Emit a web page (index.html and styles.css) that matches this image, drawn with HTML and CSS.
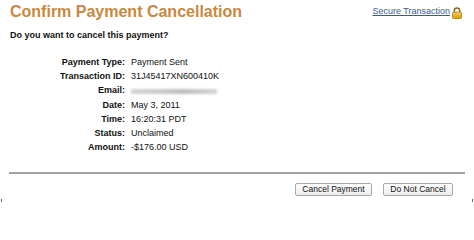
FILE: index.html
```html
<!DOCTYPE html>
<html lang="en">
<head>
<meta charset="utf-8">
<title>Confirm Payment Cancellation</title>
<link rel="stylesheet" href="styles.css">
</head>
<body>
<div class="page">
  <div class="header">
    <h1 class="title">Confirm Payment Cancellation</h1>
    <div class="secure">
      <a href="#" class="secure-link">Secure Transaction</a>
      <svg class="lock" width="10" height="12" viewBox="0 0 10 12" aria-hidden="true">
        <defs>
          <linearGradient id="lockBody" x1="0" y1="0" x2="0" y2="1">
            <stop offset="0" stop-color="#f7d25a"/>
            <stop offset="1" stop-color="#d99a12"/>
          </linearGradient>
        </defs>
        <path d="M2.3 5.5 V3.8 A2.7 2.7 0 0 1 7.7 3.8 V5.5" fill="none" stroke="#8a6a1a" stroke-width="1.5"/>
        <rect x="0.5" y="5.2" width="9" height="6.3" rx="1" fill="url(#lockBody)" stroke="#a9770e" stroke-width="0.8"/>
      </svg>
    </div>
  </div>
  <p class="question">Do you want to cancel this payment?</p>
  <div class="details">
    <div class="label">Payment Type:</div><div class="value">Payment Sent</div>
    <div class="label">Transaction ID:</div><div class="value">31J45417XN600410K</div>
    <div class="label">Email:</div><div class="value"><span class="blurred"></span></div>
    <div class="label">Date:</div><div class="value">May 3, 2011</div>
    <div class="label">Time:</div><div class="value">16:20:31 PDT</div>
    <div class="label">Status:</div><div class="value">Unclaimed</div>
    <div class="label">Amount:</div><div class="value">-$176.00 USD</div>
  </div>
  <hr class="rule">
  <div class="actions">
    <button class="btn btn-wide">Cancel Payment</button>
    <button class="btn">Do Not Cancel</button>
  </div>
</div>
<div class="footer"></div>
</body>
</html>
```
FILE: styles.css
```css
html, body {
  margin: 0;
  padding: 0;
  background: #ffffff;
}

body {
  font-family: "Liberation Sans", Arial, sans-serif;
  color: #111111;
  width: 474px;
  height: 202px;
  overflow: hidden;
}

.page {
  padding: 3px 9px 0 9px;
}

.header {
  display: flex;
  justify-content: space-between;
  align-items: flex-start;
}

.title {
  margin: 0 0 0 1px;
  font-size: 16px;
  line-height: 18px;
  font-weight: bold;
  color: #c8893f;
}

.secure {
  display: flex;
  align-items: flex-start;
  gap: 2px;
  margin-top: 3px;
  margin-right: 3px;
}

.secure-link {
  font-size: 9px;
  line-height: 11px;
  color: #3a5a93;
  text-decoration: underline;
}

.lock {
  display: block;
  margin-top: 1px;
}

.question {
  margin: 9px 0 0 1px;
  font-size: 9px;
  line-height: 11px;
  font-weight: bold;
}

.details {
  display: grid;
  grid-template-columns: 116px auto;
  column-gap: 6px;
  margin-top: 14px;
  font-size: 9px;
  line-height: 14.2px;
}

.label {
  text-align: right;
  font-weight: bold;
}

.value {
  font-weight: normal;
}

.blurred {
  display: inline-block;
  width: 86px;
  height: 5px;
  vertical-align: middle;
  background: linear-gradient(90deg, #d4d4d4 0%, #c8c8c8 40%, #bdbdbd 60%, #d6d6d6 100%);
  filter: blur(0.8px);
}

.rule {
  margin: 18px 0 0 0;
  border: 0;
  border-top: 2px solid #a3a3a3;
  height: 0;
}

.actions {
  display: flex;
  justify-content: flex-end;
  gap: 11px;
  margin-top: 9px;
  padding-right: 12px;
}

.btn {
  font-family: "Liberation Sans", Arial, sans-serif;
  font-size: 8.5px;
  line-height: 11px;
  height: 13px;
  width: 70px;
  padding: 0;
  color: #111111;
  background: linear-gradient(#ffffff, #ececec);
  border: 1px solid #a8a8a8;
  border-radius: 2px;
}

.btn-wide {
  width: 77px;
}

.footer {
  margin: 3px 1px 0 1px;
  height: 4px;
  border-left: 1px solid #666666;
  border-right: 1px solid #666666;
}
```
